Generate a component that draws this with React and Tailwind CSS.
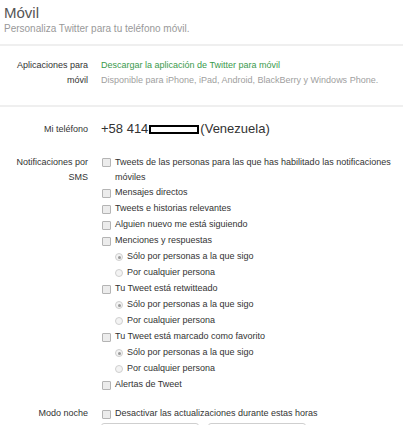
import React from "react";

const font = { fontFamily: '"Liberation Sans", Arial, sans-serif' };

function Checkbox() {
  return (
    <span className="inline-block w-[9px] h-[9px] shrink-0 border border-[#b4b4b4] bg-[#ececec] rounded-[1px]" />
  );
}

function Radio({ checked }) {
  return (
    <span className="inline-flex w-[8px] h-[8px] shrink-0 items-center justify-center rounded-full border border-[#cfcfcf] bg-[#f3f3f3]">
      {checked && <span className="block w-[3px] h-[3px] rounded-full bg-[#9a9a9a]" />}
    </span>
  );
}

function CheckRow({ children }) {
  return (
    <div className="flex items-center h-[16px]">
      <span className="ml-[1px] mr-[4px] flex items-center">
        <Checkbox />
      </span>
      <span>{children}</span>
    </div>
  );
}

function RadioRow({ checked, children }) {
  return (
    <div className="flex items-center h-[16px] pl-[14px]">
      <span className="mr-[4px] flex items-center">
        <Radio checked={checked} />
      </span>
      <span>{children}</span>
    </div>
  );
}

function Row({ label, children, className = "" }) {
  return (
    <div className={`flex ${className}`}>
      <div className="w-[88px] shrink-0 text-right text-[9px] leading-[15px] text-[#333]">
        {label}
      </div>
      <div className="ml-[13px] flex-1">{children}</div>
    </div>
  );
}

export default function App() {
  return (
    <div className="w-[403px] h-[425px] overflow-hidden bg-white" style={font}>
      {/* HEADER */}
      <div className="px-[4px] pt-[4px] pb-[9px]">
        <h1 className="text-[15px] leading-[18px] text-[#555]">Móvil</h1>
        <p className="mt-[1px] text-[10px] leading-[12px] text-[#999]">
          Personaliza Twitter para tu teléfono móvil.
        </p>
      </div>

      <div className="border-t-2 border-[#efefef]" />

      {/* APPS */}
      <Row label={<>Aplicaciones para<br />móvil</>} className="pt-[12px] pb-[17px]">
        <div className="text-[9px] leading-[15px]">
          <div className="text-[#3a9a4c]">Descargar la aplicación de Twitter para móvil</div>
          <div className="text-[#a0a0a0]">
            Disponible para iPhone, iPad, Android, BlackBerry y Windows Phone.
          </div>
        </div>
      </Row>

      <div className="border-t-2 border-[#efefef]" />

      {/* PHONE */}
      <Row label="Mi teléfono" className="pt-[13px] items-center">
        <div className="flex items-center text-[13px] leading-[18px] text-[#333]">
          <span>+58 414</span>
          <span className="inline-block w-[50px] h-[9px] border-2 border-black bg-white mx-[1px]" />
          <span>(Venezuela)</span>
        </div>
      </Row>

      {/* SMS */}
      <Row label={<>Notificaciones por<br />SMS</>} className="mt-[17px]">
        <div className="text-[9px] text-[#333]">
          <div className="flex items-start">
            <span className="ml-[1px] mr-[4px] mt-[3px] flex items-center">
              <Checkbox />
            </span>
            <span className="leading-[15px]">
              Tweets de las personas para las que has habilitado las notificaciones móviles
            </span>
          </div>
          <CheckRow>Mensajes directos</CheckRow>
          <CheckRow>Tweets e historias relevantes</CheckRow>
          <CheckRow>Alguien nuevo me está siguiendo</CheckRow>
          <CheckRow>Menciones y respuestas</CheckRow>
          <RadioRow checked>Sólo por personas a la que sigo</RadioRow>
          <RadioRow>Por cualquier persona</RadioRow>
          <CheckRow>Tu Tweet está retwitteado</CheckRow>
          <RadioRow checked>Sólo por personas a la que sigo</RadioRow>
          <RadioRow>Por cualquier persona</RadioRow>
          <CheckRow>Tu Tweet está marcado como favorito</CheckRow>
          <RadioRow checked>Sólo por personas a la que sigo</RadioRow>
          <RadioRow>Por cualquier persona</RadioRow>
          <CheckRow>Alertas de Tweet</CheckRow>
        </div>
      </Row>

      {/* NIGHT MODE */}
      <Row label="Modo noche" className="mt-[13px]">
        <div className="text-[9px] text-[#333]">
          <CheckRow>Desactivar las actualizaciones durante estas horas</CheckRow>
          <div className="flex gap-[9px] mt-[1px]">
            <div className="w-[98px] h-[20px] rounded-[3px] border border-[#cfcfcf] bg-white" />
            <div className="w-[98px] h-[20px] rounded-[3px] border border-[#cfcfcf] bg-white" />
          </div>
        </div>
      </Row>
    </div>
  );
}
